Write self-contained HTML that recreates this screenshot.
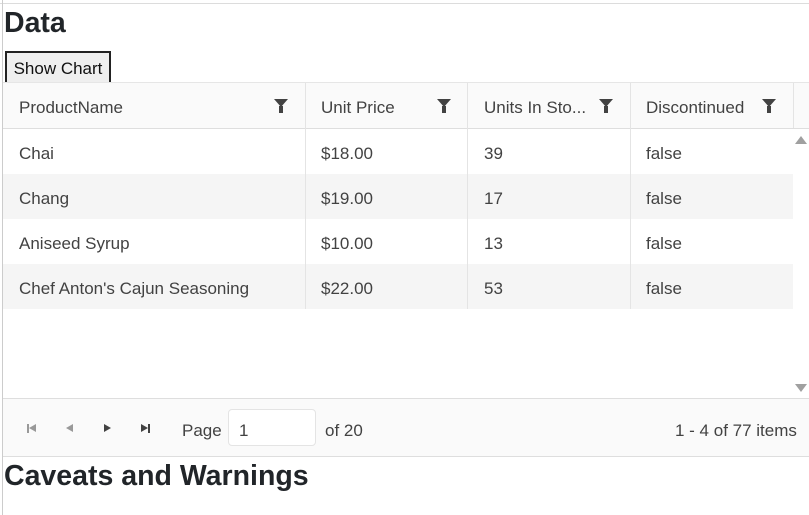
<!DOCTYPE html>
<html><head><style>
body{margin:0;width:809px;height:515px;overflow:hidden;background:#fff;font-family:"Liberation Sans",sans-serif;color:#212529;position:relative}
.a{position:absolute}
.t{font-size:17px;color:#424242;white-space:nowrap}
h{font-weight:bold;font-size:28.5px;color:#212529;position:absolute}
.f{position:absolute;width:0;height:0;border-left:7px solid transparent;border-right:7px solid transparent;border-top:8px solid #424242}
.fs{position:absolute;width:4px;height:7px;background:#424242}
</style></head><body>
<div class="a" style="left:0;top:3px;width:809px;height:1px;background:#dcdcdc"></div>
<div class="a" style="left:2px;top:0;width:1px;height:515px;background:#ccc"></div>
<h style="left:4px;top:7px">Data</h>
<div class="a" style="left:5px;top:51px;width:102px;height:29px;border:2px solid #222;background:#efefef;font-size:17px;line-height:31px;text-align:center;color:#111">Show Chart</div>
<div class="a" style="left:3px;top:82px;width:806px;height:316px;border-top:1px solid #e6e6e6"></div>
<div class="a" style="left:3px;top:83px;width:806px;height:45px;background:#fafafa;border-bottom:1px solid #dedede"></div>
<div class="a" style="left:3px;top:174px;width:790px;height:45px;background:#f5f5f5"></div>
<div class="a" style="left:3px;top:264px;width:790px;height:45px;background:#f5f5f5"></div>
<div class="a" style="left:305px;top:83px;width:1px;height:226px;background:#e4e4e4"></div>
<div class="a" style="left:467px;top:83px;width:1px;height:226px;background:#e4e4e4"></div>
<div class="a" style="left:630px;top:83px;width:1px;height:226px;background:#e4e4e4"></div>
<div class="a" style="left:793px;top:83px;width:1px;height:45px;background:#e4e4e4"></div>
<div class="t a" style="left:19px;top:98px">ProductName</div>
<div class="t a" style="left:321px;top:98px">Unit Price</div>
<div class="t a" style="left:484px;top:98px">Units In Sto...</div>
<div class="t a" style="left:646px;top:98px">Discontinued</div>
<div class="f" style="left:274px;top:99px"></div><div class="fs" style="left:279px;top:106px"></div>
<div class="f" style="left:437px;top:99px"></div><div class="fs" style="left:442px;top:106px"></div>
<div class="f" style="left:599px;top:99px"></div><div class="fs" style="left:604px;top:106px"></div>
<div class="f" style="left:762px;top:99px"></div><div class="fs" style="left:767px;top:106px"></div>
<div class="t a" style="left:19px;top:144px">Chai</div><div class="t a" style="left:321px;top:144px">$18.00</div><div class="t a" style="left:484px;top:144px">39</div><div class="t a" style="left:646px;top:144px">false</div>
<div class="t a" style="left:19px;top:189px">Chang</div><div class="t a" style="left:321px;top:189px">$19.00</div><div class="t a" style="left:484px;top:189px">17</div><div class="t a" style="left:646px;top:189px">false</div>
<div class="t a" style="left:19px;top:234px">Aniseed Syrup</div><div class="t a" style="left:321px;top:234px">$10.00</div><div class="t a" style="left:484px;top:234px">13</div><div class="t a" style="left:646px;top:234px">false</div>
<div class="t a" style="left:19px;top:279px">Chef Anton's Cajun Seasoning</div><div class="t a" style="left:321px;top:279px">$22.00</div><div class="t a" style="left:484px;top:279px">53</div><div class="t a" style="left:646px;top:279px">false</div>
<div class="a" style="left:795px;top:136px;width:0;height:0;border-left:6px solid transparent;border-right:6px solid transparent;border-bottom:8px solid #a0a0a0"></div>
<div class="a" style="left:795px;top:384px;width:0;height:0;border-left:6px solid transparent;border-right:6px solid transparent;border-top:8px solid #a0a0a0"></div>
<div class="a" style="left:3px;top:398px;width:806px;height:57px;background:#fafafa;border-top:1px solid #dedede;border-bottom:1px solid #dedede"></div>
<div class="a" style="left:27px;top:424px;width:2px;height:9px;background:#999"></div>
<div class="a" style="left:29px;top:424px;border-top:4.5px solid transparent;border-bottom:4.5px solid transparent;border-right:7px solid #999"></div>
<div class="a" style="left:66px;top:424px;border-top:4.5px solid transparent;border-bottom:4.5px solid transparent;border-right:7px solid #999"></div>
<div class="a" style="left:104px;top:424px;border-top:4.5px solid transparent;border-bottom:4.5px solid transparent;border-left:7px solid #424242"></div>
<div class="a" style="left:141px;top:424px;border-top:4.5px solid transparent;border-bottom:4.5px solid transparent;border-left:7px solid #424242"></div>
<div class="a" style="left:148px;top:424px;width:2px;height:9px;background:#424242"></div>
<div class="t a" style="left:182px;top:421px">Page</div>
<div class="a" style="left:228px;top:409px;width:86px;height:35px;background:#fff;border:1px solid #e4e4e4;border-radius:4px"></div>
<div class="t a" style="left:239px;top:421px">1</div>
<div class="t a" style="left:325px;top:421px">of 20</div>
<div class="t a" style="left:675px;top:421px">1 - 4 of 77 items</div>
<h style="left:4px;top:460px">Caveats and Warnings</h>
</body></html>
